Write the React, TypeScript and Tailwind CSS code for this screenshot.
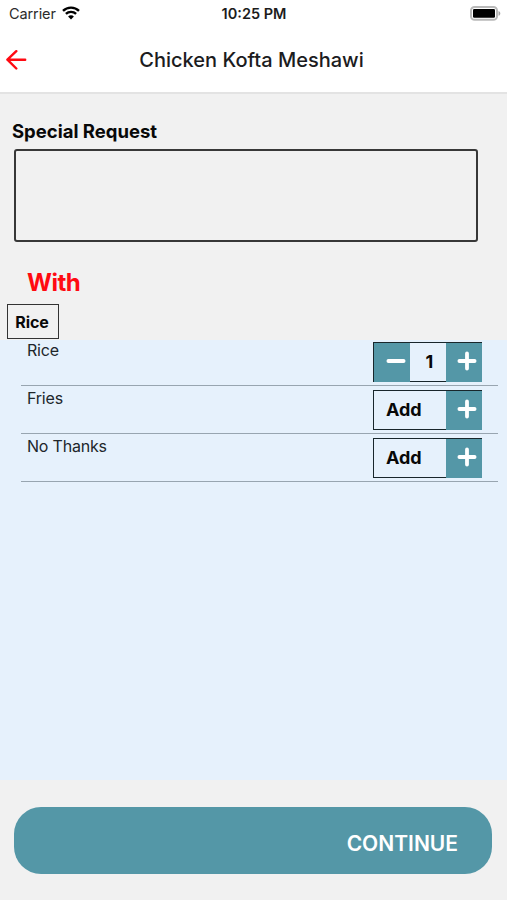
import { useState } from "react";

const TEAL = "bg-[#5497a7]";

const StatusBar = () => (
  <div className="h-7 pl-[9px] pr-[6px] grid grid-cols-3 items-center">
    <div className="flex items-center gap-[6px]">
      <span className="text-[14.5px] leading-none tracking-[-0.1px] text-[#2b2b2b]">Carrier</span>
      <svg className="-mt-[2px]" width="18" height="14" viewBox="0 0 18 14" fill="none" stroke="#000" strokeWidth="2.4">
        <path d="M1 4.8C5.4.5 12.6.5 17 4.8" />
        <path d="M3.9 7.9c2.8-2.7 7.4-2.7 10.2 0" />
        <path d="M9 13.4 6.1 10.4c1.6-1.4 4.2-1.4 5.8 0z" fill="#000" stroke="none" />
      </svg>
    </div>
    <span className="-ml-[2px] text-center text-[14.5px] leading-none font-semibold text-[#1c1c1c] whitespace-nowrap">
      10:25 PM
    </span>
    <svg className="-mt-[2px] justify-self-end" width="31" height="15" viewBox="0 0 31 15">
      <rect x="1" y="1" width="26" height="12.8" rx="3.6" fill="#fff" stroke="#b9b9b9" strokeWidth="2" />
      <rect x="3" y="3" width="22" height="8.8" rx="1.2" fill="#000" />
      <path d="M28.5 5c2.4.8 2.4 4 0 4.8z" fill="#a5a5a5" />
    </svg>
  </div>
);

const Header = () => (
  <header className="h-[94px] shrink-0 bg-white border-b-2 border-[#e3e3e3]">
    <StatusBar />
    <div className="h-[64px] pl-[6px] pr-[10px] grid grid-cols-[24px_1fr_24px] items-center">
      <button aria-label="Back">
        <svg
          width="21"
          height="20"
          viewBox="0 0 21 20"
          fill="none"
          stroke="#ff0a12"
          strokeWidth="2.4"
          strokeLinecap="round"
          strokeLinejoin="round"
        >
          <path d="M10.3 1.2 1.4 9.700l8.900 8.800M1.8 9.700h17.400" />
        </svg>
      </button>
      <h1 className="text-center text-[20px] leading-6 font-medium text-[#1c1c1e] whitespace-nowrap">
        Chicken Kofta Meshawi
      </h1>
    </div>
  </header>
);

const Sign = ({ minus }: { minus?: boolean }) => (
  <svg
    className="-mt-[3px] shrink-0"
    width="20"
    height="20"
    viewBox="0 0 20 20"
    stroke="#fff"
    strokeWidth="3.8"
    strokeLinecap="round"
  >
    <path d={minus ? "M2.400 10h15.200" : "M2.400 10h15.200M10 2.400v15.200"} />
  </svg>
);

type CounterProps = {
  count: number;
  onChange: (count: number) => void;
};

const Counter = ({ count, onChange }: CounterProps) => (
  <div className="w-[109px] h-10 flex border border-r-0 border-[#18262b]">
    {count > 0 ? (
      <>
        <button
          aria-label="Remove"
          onClick={() => onChange(count - 1)}
          className={`w-[36px] h-[39px] pl-[12px] shrink-0 flex items-center ${TEAL}`}
        >
          <Sign minus />
        </button>
        <span className="flex-1 pl-[3px] -mt-[2px] flex items-center justify-center text-[18px] font-bold">
          {count}
        </span>
      </>
    ) : (
      <span className="flex-1 pl-[12px] -mt-px flex items-center text-[18px] tracking-[-0.1px] font-bold">Add</span>
    )}
    <button
      aria-label="Add one"
      onClick={() => onChange(count + 1)}
      className={`w-[36px] h-[39px] pl-[11px] shrink-0 flex items-center ${TEAL}`}
    >
      <Sign />
    </button>
  </div>
);

const App = () => {
  const [items, setItems] = useState([
    { name: "Rice", count: 1 },
    { name: "Fries", count: 0 },
    { name: "No Thanks", count: 0 },
  ]);

  const setCount = (name: string, count: number) =>
    setItems(items.map((item) => (item.name === name ? { ...item, count } : item)));

  return (
    <div className="w-full h-[900px] flex flex-col overflow-hidden bg-[#f1f1f1] font-['Inter',sans-serif] text-[#080808]">
      <Header />

      <section className="h-[246px] shrink-0 flex flex-col items-start">
        <label htmlFor="request" className="mt-[25px] ml-[12px] text-[18.5px] leading-6 font-bold">
          Special Request
        </label>
        <textarea
          id="request"
          className="mt-[6px] ml-[14px] w-[464px] h-[93px] shrink-0 resize-none rounded-[3px] border-2 border-[#383838] outline-none"
        />
        <h2 className="mt-[25px] ml-[27px] text-[24px] leading-8 tracking-[-0.5px] font-bold text-[#ff0a12]">With</h2>
        <div className="mt-[5px] ml-[7px] pr-[2px] w-[52px] h-[35px] shrink-0 flex items-center justify-center border border-[#333] text-[16px] tracking-[-0.1px] font-bold">
          Rice
        </div>
      </section>

      <ul className="h-[440px] shrink-0 pl-[21px] pr-[9px] bg-[#e6f1fc]">
        {items.map((item, i) => (
          <li
            key={item.name}
            className={`flex justify-between items-start pl-[6px] pr-[16px] border-b border-[#98a5b0] ${
              i === 0 ? "h-[46px] pt-[2px]" : "h-[48px] pt-[4px]"
            }`}
          >
            <span className="-mt-[2px] text-[16px] leading-5 tracking-[-0.2px] text-[#20262b]">{item.name}</span>
            <Counter count={item.count} onChange={(count) => setCount(item.name, count)} />
          </li>
        ))}
      </ul>

      <footer className="pt-[27px] pl-[14px] pr-[15px]">
        <button
          className={`w-full h-[67px] pr-[34px] pt-[6px] rounded-[27px] text-right text-[21px] font-semibold text-white ${TEAL}`}
        >
          CONTINUE
        </button>
      </footer>
    </div>
  );
};

export default App;
